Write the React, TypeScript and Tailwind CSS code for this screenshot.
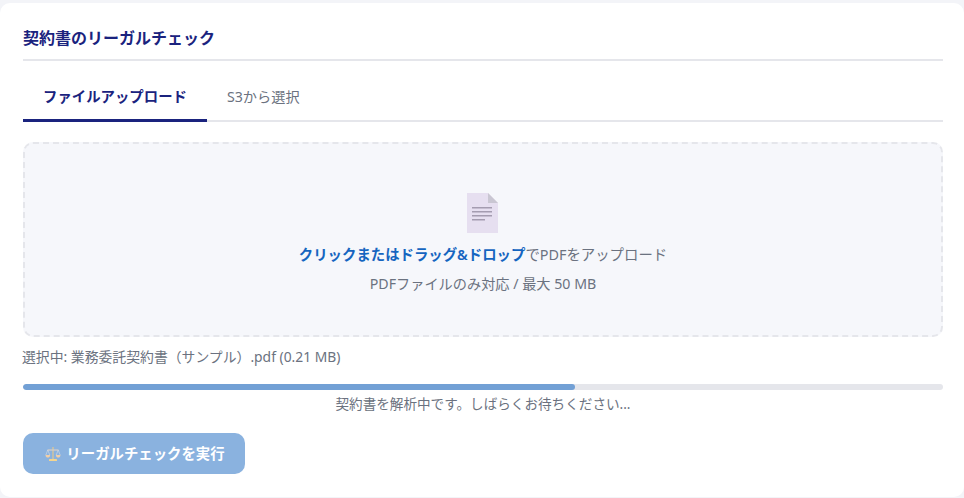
const FileIcon = () => (
  <svg width="31" height="40" viewBox="0 0 31 40" aria-hidden="true" className="mr-[1px]">
    <path d="M0 0H21L31 10V40H0Z" fill="#e6dff0" />
    <path d="M21 0L31 10H21Z" fill="#c9c6d2" />
    <rect x="5" y="14" width="20" height="1.5" fill="#a49cb0" />
    <rect x="5" y="18" width="20" height="1.5" fill="#a49cb0" />
    <rect x="5" y="22" width="20" height="1.5" fill="#a49cb0" />
    <rect x="5" y="26" width="13" height="1.5" fill="#a49cb0" />
  </svg>
);

const ScaleIcon = () => (
  <svg width="16" height="16" viewBox="0 0 16 16" aria-hidden="true" className="shrink-0">
    <path d="M8 1V13" stroke="#e3c890" strokeWidth="1.2" />
    <path d="M2.5 4H13.5" stroke="#d8cfc8" strokeWidth="1.2" />
    <path d="M2.8 4L0.8 9M2.8 4L4.8 9M13.2 4L11.2 9M13.2 4L15.2 9" stroke="#d8dde6" strokeWidth="0.6" fill="none" />
    <path d="M0.5 9H5.2C5 11 4 11.6 2.8 11.6S0.7 11 0.5 9Z" fill="#f2cfa6" />
    <path d="M10.8 9H15.5C15.3 11 14.3 11.6 13.2 11.6S11 11 10.8 9Z" fill="#f2cfa6" />
    <rect x="4" y="13" width="8" height="2" rx="0.5" fill="#f4d58f" />
  </svg>
);

export default function App() {
  return (
    <div className="h-[498px] w-[964px] overflow-hidden bg-[#f3f4f8] pt-[3px] font-['Noto_Sans','Noto_Sans_CJK_JP',sans-serif]">
      <div className="h-[494px] rounded-[10px] bg-white pt-[24px] pr-[21px] pl-[23px]">
        <h2 className="h-[34px] border-b-2 border-[#e5e6eb] text-[16px] leading-[22px] font-bold text-[#1a237e]">
          契約書のリーガルチェック
        </h2>

        <div className="mt-[18px] flex h-[43px] border-b-2 border-[#e5e6eb]">
          <div className="-mb-[2px] h-[43px] border-b-[3px] border-[#1a237e] px-[20px] pt-[8px] text-[14.4px] leading-[20px] font-semibold text-[#1a237e]">
            ファイルアップロード
          </div>
          <div className="px-[20px] pt-[8px] text-[14.2px] leading-[20px] text-[#6b7280]">S3から選択</div>
        </div>

        <div className="mt-[20px] flex h-[195px] flex-col items-center rounded-[10px] border-2 border-dashed border-[#e5e6eb] bg-[#f6f7fb] pt-[49px]">
          <FileIcon />
          <p className="mt-[11px] text-[14.4px] leading-[22px] text-[#6b7280]">
            <span className="font-semibold text-[#1565c0]">クリックまたはドラッグ&ドロップ</span>
            でPDFをアップロード
          </p>
          <p className="mt-[8px] text-[14.2px] leading-[20px] text-[#6b7280]">PDFファイルのみ対応 / 最大 50 MB</p>
        </div>

        <p className="mt-[10px] -ml-[1px] text-[13.85px] leading-[20px] text-[#6b7280]">選択中: 業務委託契約書（サンプル）.pdf (0.21 MB)</p>

        <div className="mt-[17px] h-[6px] overflow-hidden rounded-full bg-[#e5e6eb]">
          <div className="h-full w-[60%] rounded-full bg-[#72a0d5]" />
        </div>
        <p className="mt-[4px] text-center text-[13.6px] leading-[20px] text-[#6b7280]">契約書を解析中です。しばらくお待ちください...</p>

        <button className="mt-[19px] flex h-[41px] w-[222px] items-center justify-center gap-[5px] rounded-[10px] bg-[#8ab2df] pl-[2px] text-[14.4px] font-semibold text-white">
          <ScaleIcon />
          リーガルチェックを実行
        </button>
      </div>
    </div>
  );
}
